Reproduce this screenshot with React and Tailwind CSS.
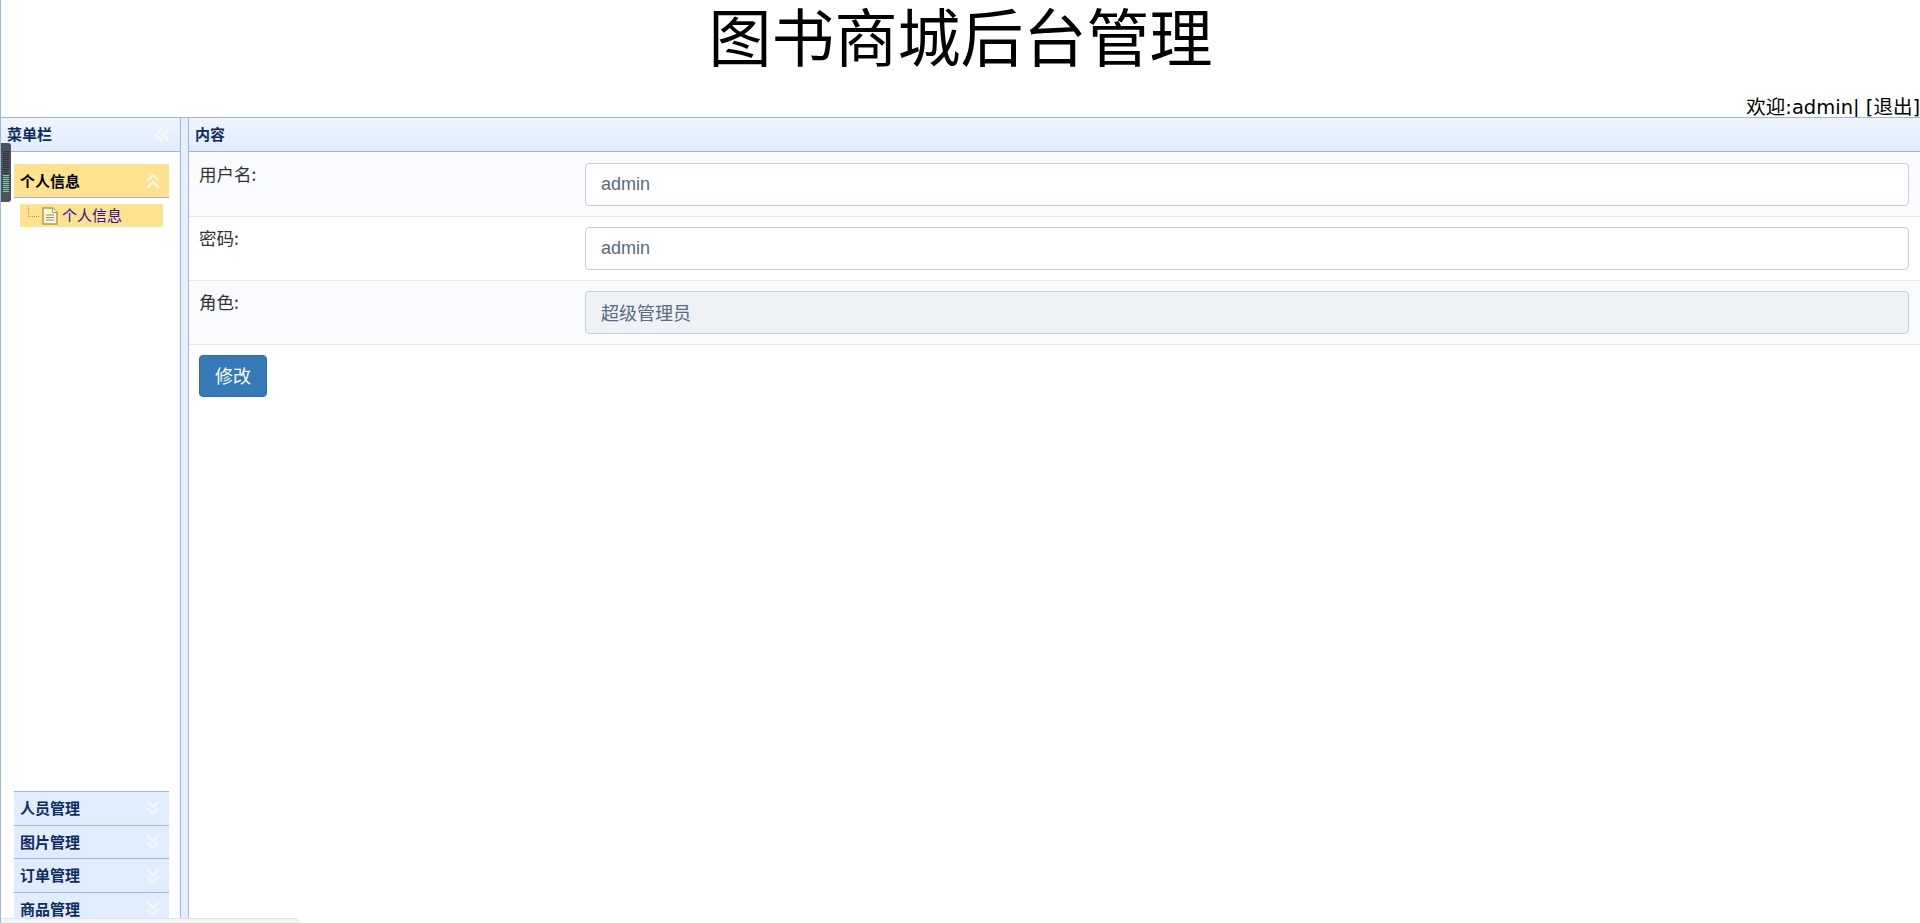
import React from 'react';
import { ChevronsLeft, ChevronsUp, ChevronsDown } from 'lucide-react';

const menus = ['人员管理', '图片管理', '订单管理', '商品管理'];

const rows = [
  { label: '用户名:', value: 'admin', tint: true, box: 'h-[65px]', inner: 'pt-[11px]', labelPad: 'pt-[10px]' },
  { label: '密码:', value: 'admin', box: 'h-[64px]', inner: 'pt-[10px]', labelPad: 'pt-[9px]' },
  { label: '角色:', value: '超级管理员', tint: true, disabled: true, box: 'h-[64px]', inner: 'pt-[10px]', labelPad: 'pt-[9px]' },
];

const cjk = "font-['Noto_Sans_CJK_SC','Microsoft_YaHei',sans-serif]";

const DocIcon = () => (
  <svg width="16" height="18" viewBox="0 0 16 18" className="shrink-0">
    <path d="M1 1h9.5L15 5.5V17H1z" fill="#fdf8d8" stroke="#ad9a62" strokeWidth="1.5" />
    <path d="M10.5 1v4.5H15" fill="#fff" stroke="#ad9a62" />
    <path d="M4 8h8M4 10.5h8M4 13h8" stroke="#8b8b80" />
  </svg>
);

const Handle = () => (
  <div className="absolute left-0 top-[143px] z-10 flex h-[59px] w-[10px] flex-col gap-[1px] rounded-r-[3px] bg-[#4a525c] px-[2px] py-[8px]">
    {Array.from({ length: 21 }).map((_, i) => (
      <div key={i} className={i > 11 ? 'h-[1px] bg-[#7fd09a]' : 'h-[1px] bg-[#2f353c]'} />
    ))}
  </div>
);

export default function App() {
  return (
    <div className={`relative flex h-[923px] flex-col overflow-hidden border-l border-[#9ab8d8] bg-white ${cjk}`}>
      <Handle />
      <header className="flex h-[117px] shrink-0 flex-col">
        <h1 className="text-center text-[63px] leading-[68px] font-normal text-black">图书商城后台管理</h1>
        <div className="mt-auto mb-[-3px] text-right font-['DejaVu_Sans','Noto_Sans_CJK_SC',sans-serif] text-[19.5px] leading-[25px] text-black">
          欢迎:admin| [退出]
        </div>
      </header>

      <div className="flex min-h-0 flex-1 border-t border-[#9ab8d8]">
        {/* 左侧菜单 */}
        <aside className="flex w-[179px] shrink-0 flex-col overflow-hidden">
          <div className="flex h-[34px] shrink-0 items-center justify-between border-b border-[#9ab8d8] bg-gradient-to-b from-[#eff5ff] to-[#e0ecff] pl-[6px] pr-[6px]">
            <span className="text-[15px] font-bold text-[#0e2d5f]">菜单栏</span>
            <ChevronsLeft size={24} strokeWidth={2.5} className="text-[#f6faff]" />
          </div>
          <div className="flex flex-col pl-[13px] pr-[11px] pt-[12px]">
            <div className="flex h-[34px] items-center justify-between border-b border-[#9ab8d8] bg-[#ffe28d] pl-[6px] pr-[4px]">
              <span className="pt-[1px] text-[15px] font-bold text-black">个人信息</span>
              <ChevronsUp size={24} strokeWidth={2.5} className="text-[#fff6d8]" />
            </div>
            <div className="mx-[6px] mt-[6px] flex h-[23px] items-center bg-[#ffe28d] pl-[8px]">
              <div className="mb-[8px] h-[11px] w-[11px] shrink-0 border-b border-l border-dotted border-[#a09a78]" />
              <div className="ml-[3px] mr-[4px] flex"><DocIcon /></div>
              <span className="text-[15px] text-[#2a0fa8]">个人信息</span>
            </div>
            <div className="h-[564px] shrink-0" />
            {menus.map(name => (
              <div key={name} className="flex h-[33.67px] shrink-0 items-center justify-between border-t border-[#9ab8d8] bg-[#e0ecff] pl-[6px] pr-[4px]">
                <span className="text-[15px] font-bold text-[#0e2d5f]">{name}</span>
                <ChevronsDown size={24} strokeWidth={2.5} className="text-[#f0f6ff]" />
              </div>
            ))}
          </div>
        </aside>

        {/* 分隔条 */}
        <div className="w-[9px] shrink-0 border-x border-[#9ab8d8] bg-[#e6effd]" />

        {/* 内容 */}
        <main className="min-w-0 flex-1">
          <div className="flex h-[34px] items-center border-b border-[#9ab8d8] bg-gradient-to-b from-[#eff5ff] to-[#e0ecff] pl-[6px]">
            <span className="text-[15px] font-bold text-[#0e2d5f]">内容</span>
          </div>
          {rows.map(row => (
            <div
              key={row.label}
              className={`flex border-b border-[#e8e8e8] pl-[10px] pr-[11px] ${row.box} ${row.tint ? 'bg-[#f9fbfe]' : 'bg-white'}`}
            >
              <label className={`w-[386px] shrink-0 text-[17.5px] leading-[24px] text-[#333] ${row.labelPad}`}>{row.label}</label>
              <div className={`flex-1 ${row.inner}`}>
                <input
                  readOnly
                  disabled={row.disabled}
                  value={row.value}
                  className={`h-[43px] w-full rounded-[4px] border border-[#c3ced9] px-[15px] font-['Liberation_Sans','Noto_Sans_CJK_SC',sans-serif] text-[18px] text-[#566a80] outline-none ${row.disabled ? 'bg-[#eef1f5] pb-[2px]' : 'bg-white'}`}
                />
              </div>
            </div>
          ))}
          <div className="pl-[10px] pt-[10px]">
            <button className="h-[42px] w-[68px] rounded-[4px] border border-[#2e6da4] bg-[#337ab7] pb-[2px] text-[18px] text-white">修改</button>
          </div>
        </main>
      </div>

      <div className="absolute bottom-0 left-0 h-[5px] w-[298px] rounded-tr-[5px] border-r border-t border-[#e4e4e4] bg-[#f5f5f5]" />
    </div>
  );
}
